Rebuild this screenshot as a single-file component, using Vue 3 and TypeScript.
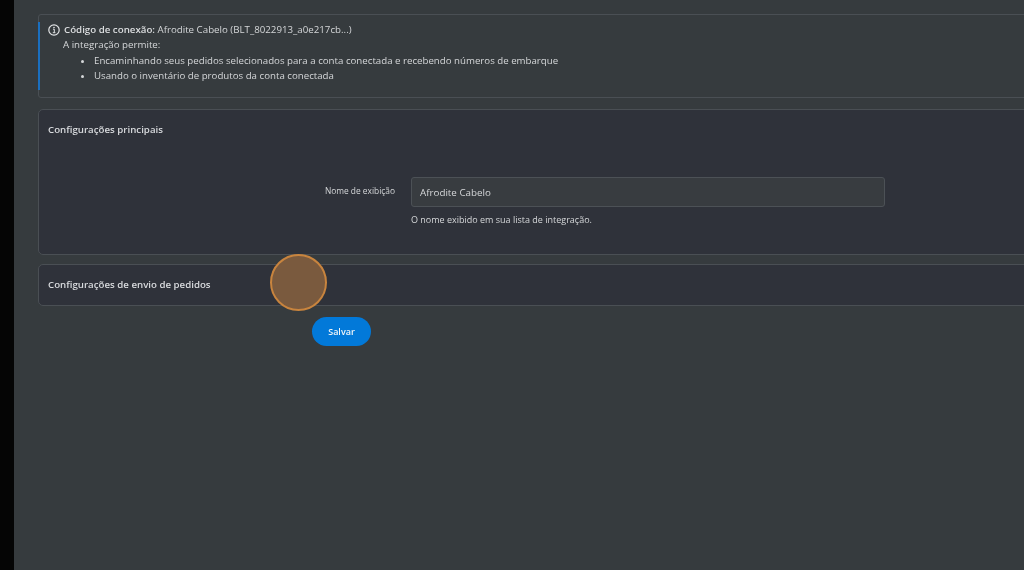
<script setup lang="ts">
const bullets: string[] = [
  'Encaminhando seus pedidos selecionados para a conta conectada e recebendo números de embarque',
  'Usando o inventário de produtos da conta conectada',
]
</script>

<template>
  <div class="page">
    <aside class="rail"></aside>
    <main class="content">
      <section class="notice">
        <div class="notice-head">
          <svg class="info" viewBox="0 0 12 12" width="12" height="12" aria-hidden="true">
            <circle cx="6" cy="6" r="5.2" fill="none" stroke="#e2e4e6" stroke-width="1.2" />
            <circle cx="6" cy="3.5" r="0.8" fill="#e2e4e6" />
            <path d="M5 5.2h1.3v3.3M4.8 8.7h2.6" fill="none" stroke="#e2e4e6" stroke-width="1" />
          </svg>
          <p class="line"><strong>Código de conexão:</strong> Afrodite Cabelo (BLT_8022913_a0e217cb...)</p>
        </div>
        <p class="line intro">A integração permite:</p>
        <ul class="list">
          <li v-for="item in bullets" :key="item">{{ item }}</li>
        </ul>
      </section>

      <section class="card main-card">
        <h2 class="title">Configurações principais</h2>
        <div class="field">
          <label class="label" for="display-name">Nome de exibição</label>
          <div class="control">
            <input id="display-name" class="input" type="text" value="Afrodite Cabelo" />
            <p class="help">O nome exibido em sua lista de integração.</p>
          </div>
        </div>
      </section>

      <section class="card shipping-card">
        <h2 class="title">Configurações de envio de pedidos</h2>
      </section>

      <div class="actions">
        <button class="save" type="button">Salvar</button>
      </div>
    </main>
    <div class="click-marker"></div>
  </div>
</template>

<style>
html, body { margin: 0; background: #363b3e; }
</style>

<style scoped>
.page {
  position: relative;
  display: flex;
  width: 1024px;
  height: 570px;
  overflow: hidden;
  background: #363b3e;
  font-family: "Open Sans", "Noto Sans", sans-serif;
  color: #d5d7d9;
  filter: blur(0.45px);
}
.rail {
  flex: 0 0 14px;
  background: #050505;
}
.content {
  flex: 1 0 auto;
  width: 1010px;
  padding: 14px 0 0 24px;
  box-sizing: border-box;
}
.notice {
  box-sizing: border-box;
  position: relative;
  width: 1020px;
  height: 84px;
  padding: 7px 9px;
  border: 1px solid #4a4f54;
  border-radius: 3px;
  background: #363b3e;
}
.notice::before {
  content: "";
  position: absolute;
  left: -1px;
  top: 7px;
  bottom: 7px;
  width: 2px;
  background: #1a6fc0;
}
.notice-head {
  display: flex;
  align-items: center;
  gap: 4px;
  height: 15px;
}
.info { flex: none; }
.line {
  margin: 0;
  font-size: 9.73px;
  line-height: 15.5px;
  white-space: nowrap;
}
.line strong { font-weight: 600; color: #dcdee0; }
.intro { margin-left: 15px; }
.list {
  margin: 0;
  padding: 0 0 0 46px;
  font-size: 9.7px;
  line-height: 15.5px;
  white-space: nowrap;
}
.card {
  box-sizing: border-box;
  width: 1020px;
  border: 1px solid #4a4f54;
  border-radius: 5px;
  background: #2f323a;
}
.main-card {
  height: 146px;
  margin-top: 11px;
  padding: 13px 9px 0;
}
.shipping-card {
  height: 42px;
  margin-top: 9px;
  padding: 13px 9px 0;
}
.title {
  margin: 0;
  font-size: 9.7px;
  line-height: 14px;
  font-weight: 600;
  color: #d9dbde;
  white-space: nowrap;
}
.field {
  display: flex;
  margin-top: 40px;
}
.label {
  width: 363px;
  padding-top: 7px;
  padding-right: 16px;
  box-sizing: border-box;
  text-align: right;
  font-size: 8.4px;
  line-height: 13px;
  color: #d5d7d9;
  white-space: nowrap;
}
.control { width: 474px; }
.input {
  display: block;
  box-sizing: border-box;
  width: 100%;
  height: 30px;
  padding: 0 8px;
  border: 1px solid #4c5156;
  border-radius: 3px;
  background: #383c40;
  color: #d5d7d9;
  font: 9.8px "Open Sans", "Noto Sans", sans-serif;
  outline: none;
}
.help {
  margin: 6px 0 0;
  font-size: 9px;
  line-height: 14px;
  color: #d5d7d9;
  white-space: nowrap;
}
.actions {
  margin-top: 11px;
  padding-left: 274px;
}
.save {
  display: block;
  width: 59px;
  height: 29px;
  padding: 0;
  border: 0;
  border-radius: 15px;
  background: #0279d9;
  color: #f1f5f8;
  font: 600 9px "Open Sans", "Noto Sans", sans-serif;
}
.click-marker {
  position: absolute;
  left: 270px;
  top: 254px;
  box-sizing: border-box;
  width: 57px;
  height: 57px;
  border: 2px solid #c8843e;
  border-radius: 50%;
  background: #7a5a3e;
}
</style>
